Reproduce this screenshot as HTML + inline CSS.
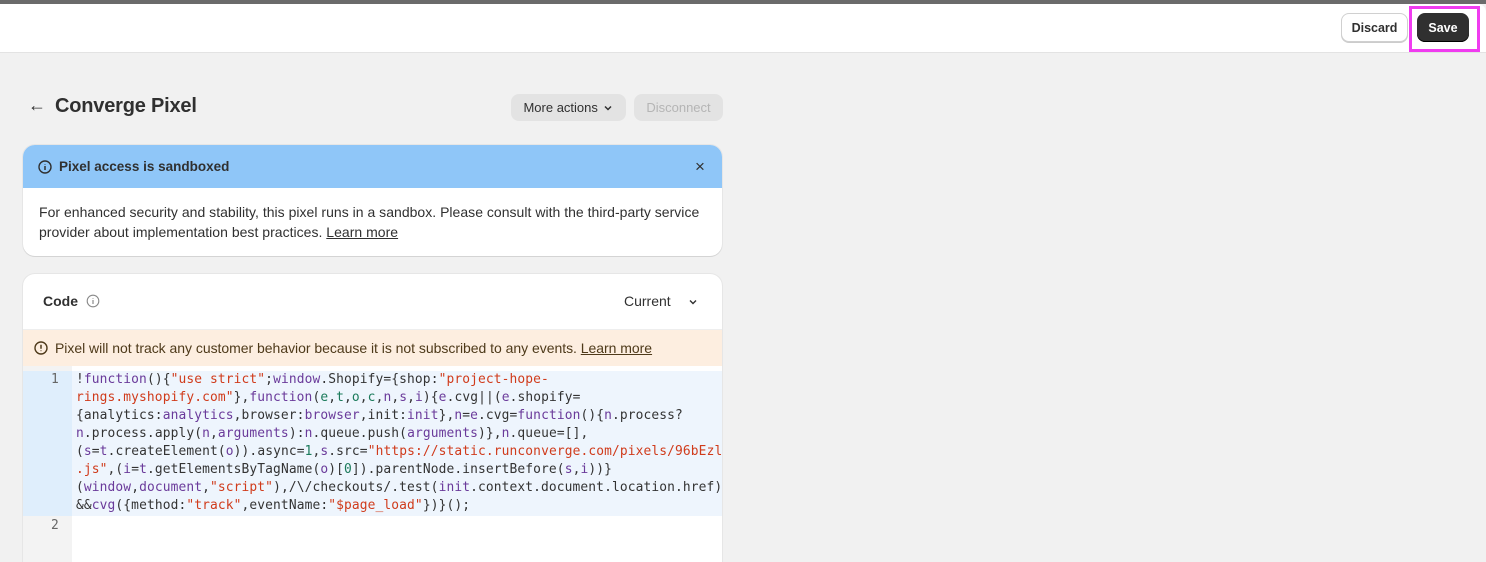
<!DOCTYPE html>
<html><head><meta charset="utf-8"><style>
*{box-sizing:border-box;margin:0;padding:0}
html,body{width:1486px;height:562px;overflow:hidden}
body{background:#f1f1f1;font-family:"Liberation Sans",sans-serif;color:#303030;position:relative}
.topline{position:absolute;left:0;top:0;width:1486px;height:4px;background:#6b6b6b}
.topbar{position:absolute;left:0;top:4px;width:1486px;height:49px;background:#fff;border-bottom:1px solid #e3e3e3;border-top-right-radius:8px}
.abs{position:absolute;white-space:nowrap}
.btn{position:absolute;border-radius:8px;font-size:12.5px;font-weight:bold;display:flex;align-items:center;justify-content:center}
.card{position:absolute;left:23px;width:699px;background:#fff;border-radius:12px;box-shadow:0 1px 0 #d4d4d4,0 0 0 1px #e6e6e6;overflow:hidden}
pre{font-family:"DejaVu Sans Mono",monospace;font-size:12.9px;line-height:18px;color:#333;white-space:pre !important}
.k{color:#6a3a9a}.s{color:#d03b1b}.g{color:#1a7a5a}
</style></head><body>
<div class="topline"></div>
<div class="topbar"></div>
<div class="btn" style="left:1341px;top:13px;width:67px;height:29px;border:1px solid #d0d0d0;background:#fff;color:#303030;box-shadow:0 1px 0 #ccc">Discard</div>
<div class="abs" style="left:1409px;top:6px;width:71px;height:46px;border:3px solid #f03cf0"></div>
<div class="btn" style="left:1417px;top:13px;width:52px;height:29px;background:#303030;color:#fff;box-shadow:inset 0 -1px 0 #000">Save</div>

<div class="abs" style="left:28px;top:95px;font-size:18px">&#8592;</div>
<div class="abs" style="left:55px;top:95px;font-size:20px;font-weight:bold;color:#303030;letter-spacing:-0.2px">Converge Pixel</div>
<div class="btn" style="left:511px;top:94px;width:115px;height:27px;background:#e3e3e3;color:#303030;font-weight:normal;font-size:13px">More actions&nbsp;<svg width="12" height="12" viewBox="0 0 12 12"><path d="M3 4.5l3 3 3-3" stroke="#303030" stroke-width="1.5" fill="none"/></svg></div>
<div class="btn" style="left:634px;top:94px;width:89px;height:27px;background:#e3e3e3;color:#b5b5b5;font-weight:normal;font-size:13px">Disconnect</div>

<div class="card" style="top:145px;height:111px">
 <div style="height:43px;background:#8fc6f8;position:relative">
  <svg class="abs" style="left:14px;top:14px" width="16" height="16" viewBox="0 0 16 16"><circle cx="8" cy="8" r="6" stroke="#303030" stroke-width="1.4" fill="none"/><path d="M8 7v4M8 5v.5" stroke="#303030" stroke-width="1.5"/></svg>
  <div class="abs" style="left:36px;top:14px;font-size:13.5px;font-weight:bold">Pixel access is sandboxed</div>
  <div class="abs" style="left:672px;top:12px;font-size:17px">&#215;</div>
 </div>
 <div class="abs" style="left:16px;top:57px;font-size:14px;line-height:20px;letter-spacing:0.02px">For enhanced security and stability, this pixel runs in a sandbox. Please consult with the third-party service<br>provider about implementation best practices. <u>Learn more</u></div>
</div>

<div class="card" style="top:274px;height:288px;border-bottom-left-radius:0;border-bottom-right-radius:0">
 <div class="abs" style="left:20px;top:19px;font-size:14px;font-weight:bold">Code</div>
 <svg class="abs" style="left:63px;top:20px" width="14" height="14" viewBox="0 0 14 14"><circle cx="7" cy="7" r="5.8" stroke="#8a8a8a" stroke-width="1.1" fill="none"/><path d="M7 6v4M7 4v.6" stroke="#8a8a8a" stroke-width="1.2"/></svg>
 <div class="abs" style="left:601px;top:19px;font-size:14px">Current</div>
 <svg class="abs" style="left:664px;top:22px" width="12" height="12" viewBox="0 0 12 12"><path d="M3 4.5l3 3 3-3" stroke="#303030" stroke-width="1.4" fill="none"/></svg>
 <div class="abs" style="left:0;top:55px;width:699px;height:37px;background:#fdeee0;border-top:1px solid #eee"></div>
 <svg class="abs" style="left:10px;top:66px" width="16" height="16" viewBox="0 0 16 16"><circle cx="8" cy="8" r="6" stroke="#4e3a1a" stroke-width="1.4" fill="none"/><path d="M8 4.8v4M8 10.5v.6" stroke="#4e3a1a" stroke-width="1.5"/></svg>
 <div class="abs" style="left:32px;top:66px;font-size:14px;color:#4e3a1a;letter-spacing:-0.03px">Pixel will not track any customer behavior because it is not subscribed to any events. <u>Learn more</u></div>
 <div class="abs" style="left:0;top:92px;width:49px;height:220px;background:#f3f3f3"></div>
 <div class="abs" style="left:0;top:97px;width:49px;height:145px;background:#dfeefc"></div>
 <div class="abs" style="left:49px;top:97px;width:650px;height:145px;background:#eef5fd"></div>
 <pre class="abs" style="left:28px;top:97px;color:#666">1</pre>
 <pre class="abs" style="left:28px;top:243px;color:#666">2</pre>
 <pre class="abs" style="left:53px;top:97px;letter-spacing:0.12px">!<span class="k">function</span>(){<span class="s">"use strict"</span>;<span class="k">window</span>.Shopify={shop:<span class="s">"project-hope-
rings.myshopify.com"</span>},<span class="k">function</span>(<span class="g">e</span>,<span class="g">t</span>,<span class="g">o</span>,<span class="g">c</span>,<span class="k">n</span>,<span class="k">s</span>,<span class="k">i</span>){<span class="k">e</span>.cvg||(<span class="k">e</span>.shopify=
{analytics:<span class="k">analytics</span>,browser:<span class="k">browser</span>,init:<span class="k">init</span>},<span class="k">n</span>=<span class="k">e</span>.cvg=<span class="k">function</span>(){<span class="k">n</span>.process?
<span class="k">n</span>.process.apply(<span class="k">n</span>,<span class="k">arguments</span>):<span class="k">n</span>.queue.push(<span class="k">arguments</span>)},<span class="k">n</span>.queue=[],
(<span class="k">s</span>=<span class="k">t</span>.createElement(<span class="k">o</span>)).async=<span class="g">1</span>,<span class="k">s</span>.src=<span class="s">"https://static.runconverge.com/pixels/96bEzl
.js"</span>,(<span class="k">i</span>=<span class="k">t</span>.getElementsByTagName(<span class="k">o</span>)[<span class="g">0</span>]).parentNode.insertBefore(<span class="k">s</span>,<span class="k">i</span>))}
(<span class="k">window</span>,<span class="k">document</span>,<span class="s">"script"</span>),/\/checkouts/.test(<span class="k">init</span>.context.document.location.href)
&amp;&amp;<span class="k">cvg</span>({method:<span class="s">"track"</span>,eventName:<span class="s">"$page_load"</span>})}();</pre>
</div>
</body></html>
